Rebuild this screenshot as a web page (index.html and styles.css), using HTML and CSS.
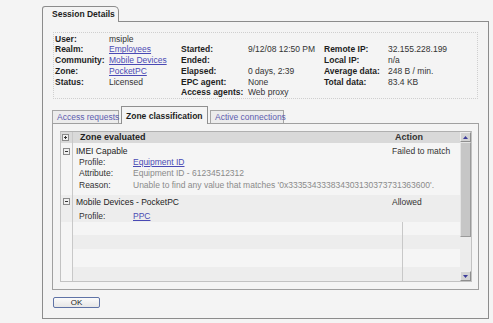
FILE: index.html
```html
<!DOCTYPE html>
<html>
<head>
<meta charset="utf-8">
<link rel="stylesheet" href="styles.css">
</head>
<body>
<div class="dialog">
  <div class="main-tabs"><div class="main-tab">Session Details</div></div>
  <div class="panel">
    <div class="info">
      <div class="col col1">
        <span class="lbl">User:</span><span class="val">msiple</span>
        <span class="lbl">Realm:</span><span class="val"><a class="link">Employees</a></span>
        <span class="lbl">Community:</span><span class="val"><a class="link">Mobile Devices</a></span>
        <span class="lbl">Zone:</span><span class="val"><a class="link">PocketPC</a></span>
        <span class="lbl">Status:</span><span class="val">Licensed</span>
      </div>
      <div class="col col2">
        <span class="lbl">Started:</span><span class="val">9/12/08 12:50 PM</span>
        <span class="lbl">Ended:</span><span class="val"></span>
        <span class="lbl">Elapsed:</span><span class="val">0 days, 2:39</span>
        <span class="lbl">EPC agent:</span><span class="val">None</span>
        <span class="lbl">Access agents:</span><span class="val">Web proxy</span>
      </div>
      <div class="col col3">
        <span class="lbl">Remote IP:</span><span class="val">32.155.228.199</span>
        <span class="lbl">Local IP:</span><span class="val">n/a</span>
        <span class="lbl">Average data:</span><span class="val">248 B / min.</span>
        <span class="lbl">Total data:</span><span class="val">83.4 KB</span>
      </div>
    </div>

    <div class="sub-tabs">
      <div class="sub-tab tab-a">Access requests</div>
      <div class="sub-tab active tab-b">Zone classification</div>
      <div class="sub-tab tab-c">Active connections</div>
    </div>

    <div class="sub-panel">
      <div class="table">
        <div class="table-main">
          <div class="thead">
            <div class="gutter"><svg class="box" width="7" height="7" viewBox="0 0 7 7"><rect x="0.5" y="0.5" width="6" height="6" fill="#f0f0f0" stroke="#8a8a8a"/><path d="M2 3.5h3M3.5 2v3" stroke="#333" stroke-width="1"/></svg></div>
            <div class="cell-main th">Zone evaluated</div>
            <div class="cell-act th act-h">Action</div>
          </div>
          <div class="tbody">
            <div class="group g1">
              <div class="row zone-row">
                <div class="gutter"><svg class="box" width="7" height="7" viewBox="0 0 7 7"><rect x="0.5" y="0.5" width="6" height="6" fill="#f0f0f0" stroke="#8a8a8a"/><path d="M2 3.5h3" stroke="#333" stroke-width="1"/></svg></div>
                <div class="cell-main zname">IMEI Capable</div>
                <div class="cell-act">Failed to match</div>
              </div>
              <div class="row detail">
                <div class="gutter"></div>
                <div class="cell-main"><span class="dl">Profile:</span><a class="link">Equipment ID</a></div>
              </div>
              <div class="row detail">
                <div class="gutter"></div>
                <div class="cell-main"><span class="dl">Attribute:</span><span class="grey">Equipment ID - 61234512312</span></div>
              </div>
              <div class="row detail">
                <div class="gutter"></div>
                <div class="cell-main"><span class="dl">Reason:</span><span class="grey">Unable to find any value that matches '0x333534333834303130373731363600'.</span></div>
              </div>
            </div>
            <div class="group g2">
              <div class="row zone-row2">
                <div class="gutter"><svg class="box" width="7" height="7" viewBox="0 0 7 7"><rect x="0.5" y="0.5" width="6" height="6" fill="#f0f0f0" stroke="#8a8a8a"/><path d="M2 3.5h3" stroke="#333" stroke-width="1"/></svg></div>
                <div class="cell-main zname">Mobile Devices - PocketPC</div>
                <div class="cell-act">Allowed</div>
              </div>
              <div class="row detail2">
                <div class="gutter"></div>
                <div class="cell-main"><span class="dl">Profile:</span><a class="link">PPC</a></div>
              </div>
            </div>
            <div class="filler">
              <div class="stripe plain"></div>
              <div class="stripe dot"></div>
              <div class="stripe plain tall"></div>
              <div class="stripe dot last"></div>
            </div>
          </div>
        </div>
        <div class="scrollbar">
          <div class="sb-btn"><svg width="5" height="3" viewBox="0 0 5 3"><path d="M2.5 0L5 3H0z" fill="#3b3b9a"/></svg></div>
          <div class="sb-thumb"></div>
          <div class="sb-track"></div>
          <div class="sb-btn"><svg width="5" height="3" viewBox="0 0 5 3"><path d="M0 0h5L2.5 3z" fill="#3b3b9a"/></svg></div>
        </div>
      </div>
    </div>

    <div class="buttons"><button class="ok">OK</button></div>
  </div>
</div>
</body>
</html>
```

FILE: styles.css
```css
* { box-sizing: border-box; }
body {
  margin: 0;
  background: #f4f4f4;
  font-family: "Liberation Sans", Arial, sans-serif;
  font-size: 8.5px;
  color: #2a2a2a;
}
.dialog { margin: 6px 0 0 42px; width: 447px; }
.main-tabs { display: flex; height: 15px; }
.main-tab {
  position: relative;
  z-index: 1;
  width: 77px;
  height: 16px;
  border: 1px solid #8c8c8c;
  border-bottom: none;
  border-radius: 3px 5px 0 0;
  background: #f4f4f4;
  font-weight: bold;
  color: #1e1e1e;
  padding: 2px 0 0 9px;
  line-height: 11px;
}
.panel {
  border: 1px solid #8c8c8c;
  height: 298px;
  padding: 10px 0 0 9px;
}
.info {
  margin-left: 1px;
  width: 425px;
  height: 67px;
  border: 1px dotted #cfcfcf;
  display: flex;
  padding-left: 1px;
  padding-top: 0.5px;
  line-height: 10.8px;
}
.col { display: grid; align-content: start; }
.col1 { width: 126px; grid-template-columns: 54px 72px; }
.col2 { width: 143px; grid-template-columns: 67px 76px; padding-top: 10.8px; }
.col3 { flex: 1; grid-template-columns: 64px 1fr; padding-top: 10.8px; }
.lbl { font-weight: bold; color: #1e1e1e; white-space: nowrap; }
.val { color: #333; white-space: nowrap; min-height: 10.8px; }
.link { color: #4a4ab4; text-decoration: underline; }

.sub-tabs {
  display: flex;
  align-items: flex-end;
  gap: 2px;
  margin-top: 7px;
  height: 17px;
}
.sub-tab {
  height: 13px;
  border: 1px solid #a5a5a5;
  border-bottom: none;
  background: #ececec;
  color: #5c5cb0;
  padding: 1px 0 0 4px;
  line-height: 11px;
  white-space: nowrap;
}
.tab-a { width: 67px; }
.tab-b { width: 87px; }
.tab-c { width: 74px; }
.sub-tab.active {
  position: relative;
  z-index: 1;
  height: 18px;
  margin-bottom: -1px;
  background: #f4f4f4;
  border-color: #8f8f8f;
  color: #1e1e1e;
  font-weight: bold;
  padding: 4px 0 0 4px;
}
.sub-panel {
  width: 427px;
  height: 167px;
  border: 1px solid #a0a0a0;
  padding: 7px 0 0 7px;
}
.table {
  width: 412px;
  height: 151px;
  border: 1px solid #c2c2c2;
  border-top-color: #b0b0b0;
  display: flex;
  background: #f5f5f5;
}
.table-main { flex: 1; display: flex; flex-direction: column; min-width: 0; }
.thead {
  display: flex;
  height: 11px;
  background: #d9d9d9;
  line-height: 11px;
}
.thead .gutter { border-right: 1px solid #c8c8c8; }
.gutter { width: 12px; flex: none; padding: 2px 0 0 1px; }
.th { font-weight: bold; color: #1e1e1e; font-size: 9px; }
.thead .cell-main { padding-left: 7px; }
.cell-main { flex: 1; white-space: nowrap; overflow: hidden; }
.cell-act { width: 70px; flex: none; padding-left: 2px; white-space: nowrap; color: #333; }
.act-h { padding-left: 5px; }
.box { display: block; }
.tbody {
  flex: 1;
  display: flex;
  flex-direction: column;
  background: linear-gradient(to right, transparent 11px, #c8c8c8 11px, #c8c8c8 12px, transparent 12px);
}
.row { display: flex; line-height: 11.4px; }
.zone-row { padding-top: 3px; line-height: 11px; }
.zone-row .gutter, .zone-row2 .gutter { padding-top: 2px; padding-left: 2px; }
.zname { padding-left: 3px; color: #222; }
.detail .cell-main, .detail2 .cell-main { padding-left: 6px; }
.dl { display: inline-block; width: 54px; color: #333; }
.grey { color: #8a8a8a; }
.g1 { height: 52px; }
.g2 {
  height: 27px;
  background: #ededed linear-gradient(to right, transparent 11px, #c8c8c8 11px, #c8c8c8 12px, transparent 12px);
}
.zone-row2 { padding-top: 1px; line-height: 12px; }
.detail2 { padding-top: 2px; line-height: 12px; }
.filler { flex: 1; display: flex; flex-direction: column; }
.stripe { height: 13px; margin-left: 341px; border-left: 1px solid #c8c8c8; }
.stripe.dot {
  height: 14px;
  background: #ededed;
  margin-left: 12px;
  border-left: none;
  box-shadow: inset 329px 0 0 #ededed, inset 330px 0 0 #c8c8c8;
}
.stripe.tall { height: 18px; }
.stripe.last { flex: 1; }
.scrollbar { width: 11px; flex: none; display: flex; flex-direction: column; background: #e6e6e6; }
.sb-btn {
  height: 10px;
  background: #d3d3d3;
  border: 1px solid;
  border-color: #eeeeee #8e8e8e #8e8e8e #eeeeee;
  display: flex;
  align-items: center;
  justify-content: center;
}
.sb-btn svg { display: block; }
.sb-thumb {
  height: 95px;
  background: #c6c6c6;
  border: 1px solid;
  border-color: #e4e4e4 #9a9a9a #9a9a9a #e4e4e4;
}
.sb-track { flex: 1; background: #ececec; }
.buttons { margin-top: 7px; padding-left: 1px; }
.ok {
  width: 47px;
  height: 11px;
  border: 1px solid #5f73a6;
  border-radius: 2px;
  background: linear-gradient(#fbfbfb, #e6e6e6);
  font-family: "Liberation Sans", Arial, sans-serif;
  font-size: 8px;
  line-height: 9px;
  padding: 0;
  color: #222;
  display: block;
}
```
